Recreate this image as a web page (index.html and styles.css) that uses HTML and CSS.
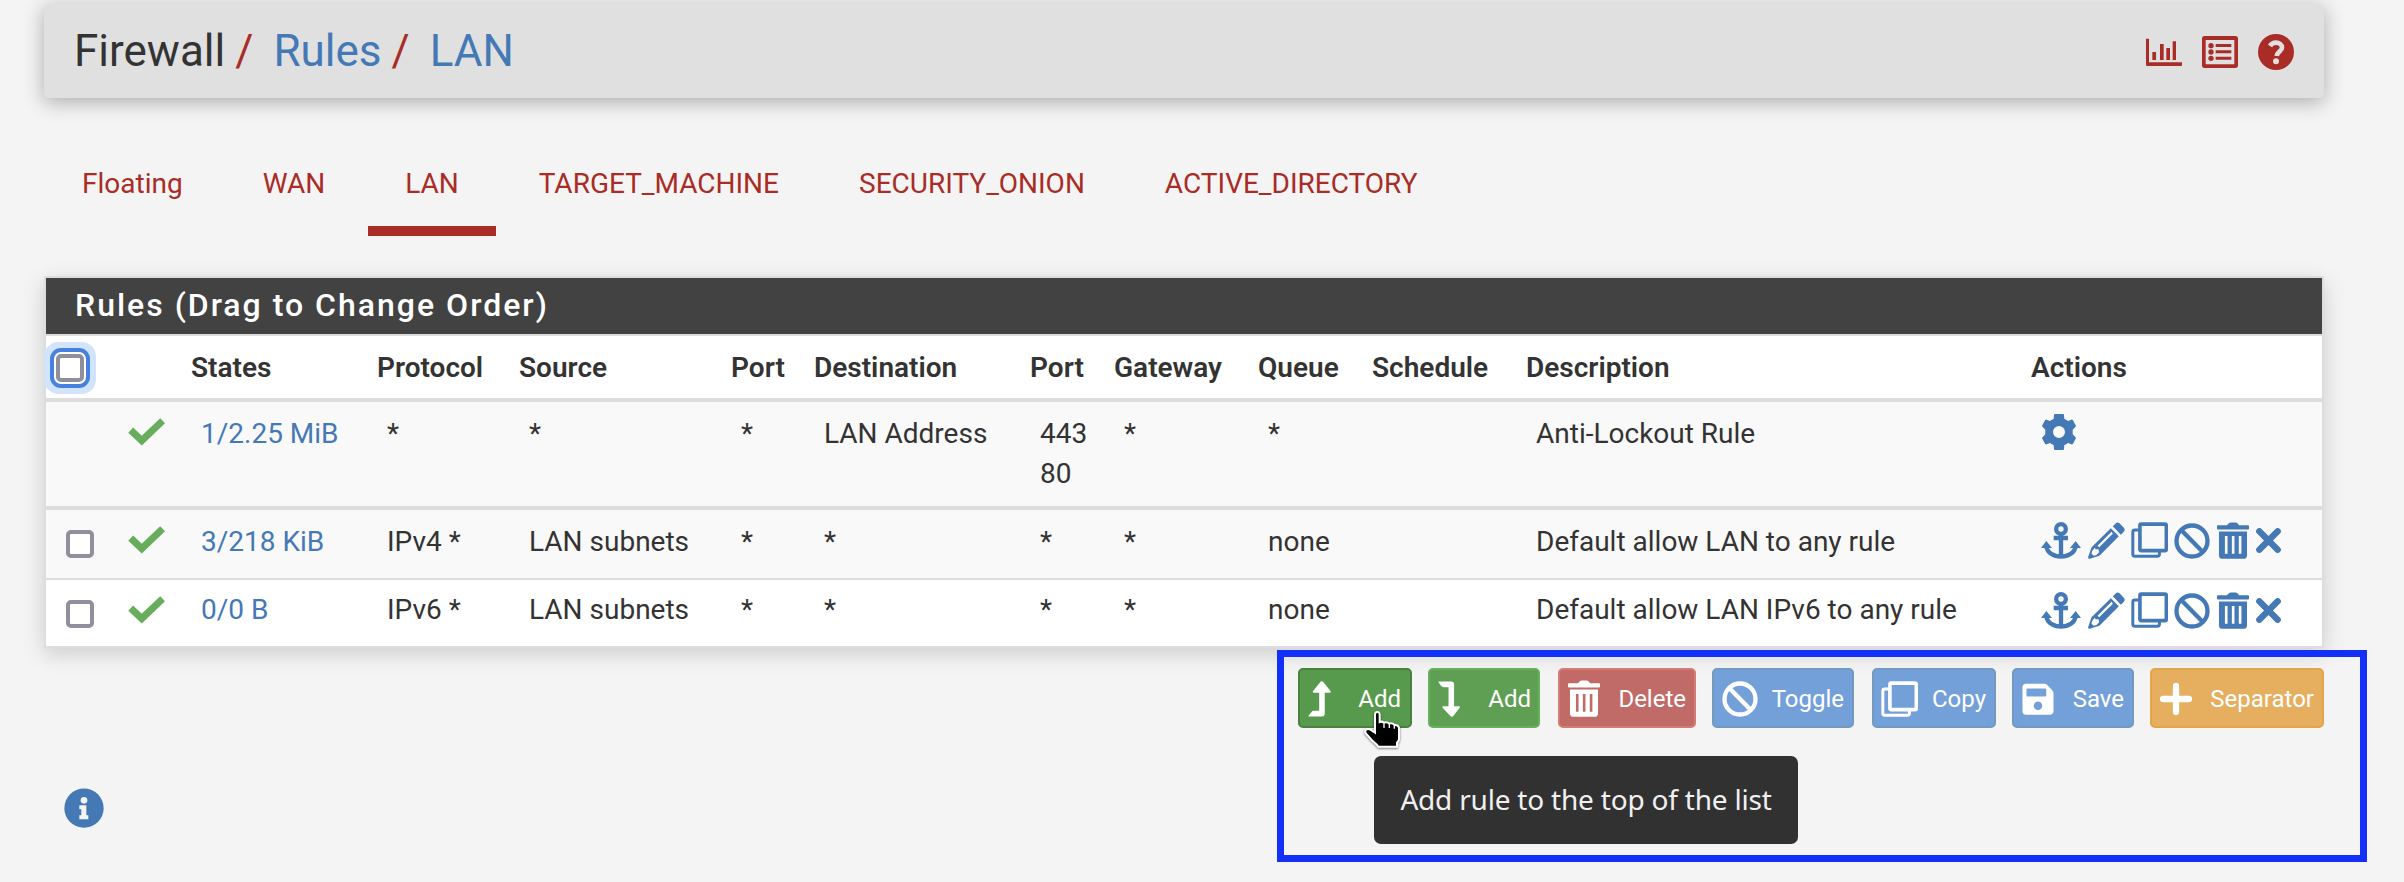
FILE: index.html
```html
<!DOCTYPE html>
<html lang="en">
<head>
<meta charset="utf-8">
<title>Firewall: Rules: LAN</title>
<link rel="stylesheet" href="styles.css">
</head>
<body>
<svg class="sprite" aria-hidden="true">
  <symbol id="i-chart" viewBox="0 0 108 84">
    <path d="M0 2h9v71h99v9q0 2-4 2H4q-4 0-4-4zM19 42h11v24H19zM42 18h11v48H42zM61 30h11v36H61zM80 10h10v56H80z" fill="currentColor"/>
  </symbol>
  <symbol id="i-list" viewBox="0 0 108 96">
    <path fill="currentColor" fill-rule="evenodd" d="M8 0h92q8 0 8 8v80q0 8-8 8H8q-8 0-8-8V8Q0 0 8 0zM11 12v71q0 2 2 2h82q2 0 2-2V12z"/>
    <path fill="currentColor" d="M41 24h47v9H41zM41 43h47v9H41zM41 62h47v9H41z"/>
    <circle cx="27" cy="29" r="8" fill="currentColor"/><circle cx="27" cy="48" r="8" fill="currentColor"/><circle cx="27" cy="67" r="8" fill="currentColor"/>
  </symbol>
  <symbol id="i-help" viewBox="0 0 108 108">
    <circle cx="54" cy="54" r="54" fill="currentColor"/>
    <path d="M36 36C40 29 46 26 54 26C64 26 72 32 72 41C72 51 58 52 56 66" fill="none" stroke="#e0e0e0" stroke-width="14"/>
    <circle cx="54" cy="82" r="9" fill="#e0e0e0"/>
  </symbol>
  <symbol id="i-check" viewBox="0 0 110 83">
    <path d="M8 36L41 67L103 8" fill="none" stroke="currentColor" stroke-width="21"/>
  </symbol>
  <symbol id="i-gear" viewBox="0 0 102 108">
    <path fill="currentColor" fill-rule="evenodd" d="M36 3Q36 0 39 0H63Q66 0 66 3L67 15Q73 17 78 21L88 17Q91 16 93 19L101 34Q103 37 100 39L92 47V61L100 69Q103 71 101 74L93 89Q91 92 88 91L78 87Q73 91 67 93L66 105Q66 108 63 108H39Q36 108 36 105L35 93Q29 91 24 87L14 91Q11 92 9 89L1 74Q-1 71 2 69L10 61V47L2 39Q-1 37 1 34L9 19Q11 16 14 17L24 21Q29 17 35 15zM51 36a18 18 0 1 0 0 36a18 18 0 1 0 0-36z"/>
  </symbol>
  <symbol id="i-anchor" viewBox="0 0 120 114">
    <g fill="none" stroke="currentColor">
      <circle cx="60" cy="21" r="14.5" stroke-width="13"/>
      <path d="M60 34V104M38 48H81" stroke-width="13"/>
      <path d="M16 72C18 92 38 104 60 104S102 92 104 72" stroke-width="13"/>
    </g>
    <path fill="currentColor" d="M0 78L16 57L33 78zM87 78L104 57L120 78z"/>
  </symbol>
  <symbol id="i-pencil" viewBox="0 0 110 111">
    <path fill="currentColor" d="M84 3Q89-1 94 4L107 17Q112 23 107 29L98 38L74 13z"/>
    <path fill="currentColor" fill-rule="evenodd" d="M68 19L92 43L39 96Q36 100 31 102L5 110Q-1 112 0 105L9 79Q10 75 14 72zM20 77L12 87L10 95L17 101L25 99L33 91L31 82H22zM70 29L28 71L33 76L74 35z"/>
  </symbol>
  <symbol id="i-clone" viewBox="0 0 112 111">
    <path d="M23 24H12Q5.500 24 5.500 30V97Q5.500 103 11 103H80Q86 103 86 97V88" fill="none" stroke="currentColor" stroke-width="9"/>
    <rect x="27" y="6" width="80" height="80" rx="4" fill="none" stroke="currentColor" stroke-width="11"/>
  </symbol>
  <symbol id="i-ban" viewBox="0 0 107 108">
    <g fill="none" stroke="currentColor" stroke-width="13"><circle cx="53.500" cy="54" r="46.500"/><path d="M21 21L86 87"/></g>
  </symbol>
  <symbol id="i-trash" viewBox="0 0 97 114">
    <path fill="currentColor" d="M3 9H30L36 3Q38 1 42 1H56Q60 1 62 3L67 9H94Q97 9 97 12V20Q97 22 94 22H3Q0 22 0 20V12Q0 9 3 9z"/>
    <path fill="currentColor" fill-rule="evenodd" d="M6 28H91V100Q91 111 80 111H17Q6 111 6 100zM24 42V96H32V42zM45 42V96H53V42zM66 42V96H74V42z"/>
  </symbol>
  <symbol id="i-times" viewBox="0 0 75 75">
    <path d="M10 10L65 65M65 10L10 65" stroke="currentColor" stroke-width="19" stroke-linecap="round"/>
  </symbol>
  <symbol id="i-up" viewBox="0 0 70 108">
    <path fill="currentColor" d="M42 0Q45 0 47 3L68 29Q71 35 66 35H51V98Q51 107 42 107H3Q0 107 2 104L10 94Q13 90 18 90H34V35H18Q12 35 16 29L37 3Q39 0 42 0z"/>
  </symbol>
  <symbol id="i-down" viewBox="0 0 70 108">
    <path fill="currentColor" d="M42 108Q45 108 47 105L66 81Q69 76 64 76H49V10Q49 1 40 1H3Q0 1 2 4L9 14Q12 18 17 18H32V76H16Q11 76 14 81L37 105Q39 108 42 108z"/>
  </symbol>
  <symbol id="i-save" viewBox="0 0 96 97">
    <path fill="currentColor" fill-rule="evenodd" d="M12 2H66Q72 2 76 6L91 22Q95 26 95 31V85Q95 96 84 96H12Q1 96 1 85V13Q1 2 12 2zM16 17Q13 17 13 20V38Q13 41 16 41H70Q73 41 73 38V20Q73 17 70 17zM48 56a13 13 0 1 0 0 26a13 13 0 1 0 0-26z"/>
  </symbol>
  <symbol id="i-plus" viewBox="0 0 96 96">
    <path d="M48 9V87M9 48H87" stroke="currentColor" stroke-width="19" stroke-linecap="round"/>
  </symbol>
  <symbol id="i-info" viewBox="0 0 120 120">
    <circle cx="60" cy="60.500" r="59" fill="currentColor"/>
    <circle cx="60" cy="37" r="10" fill="#f4f4f4"/>
    <path fill="#f4f4f4" d="M46 52H67V82H73V94H46V82H52V64H46z"/>
  </symbol>
</svg>

<div class="page">
  <header class="page-header">
    <h1 class="crumbs">Firewall<span class="sep">/</span><a>Rules</a><span class="sep">/</span><a>LAN</a></h1>
    <div class="header-icons">
      <svg class="ic-chart"><use href="#i-chart"/></svg>
      <svg class="ic-list"><use href="#i-list"/></svg>
      <svg class="ic-help"><use href="#i-help"/></svg>
    </div>
  </header>

  <nav class="tabs">
    <a>Floating</a><a>WAN</a><a class="active">LAN</a><a>TARGET_MACHINE</a><a>SECURITY_ONION</a><a>ACTIVE_DIRECTORY</a>
  </nav>

  <section class="panel">
    <h2 class="panel-title">Rules (Drag to Change Order)</h2>
    <table class="rules">
      <colgroup>
        <col class="c-box"><col class="c-ok"><col class="c-states"><col class="c-proto"><col class="c-src"><col class="c-sport"><col class="c-dst"><col class="c-dport"><col class="c-gw"><col class="c-queue"><col class="c-sched"><col class="c-desc"><col class="c-act">
      </colgroup>
      <thead>
        <tr>
          <th><span class="box focused"></span></th><th></th><th>States</th><th>Protocol</th><th>Source</th><th>Port</th><th>Destination</th><th>Port</th><th>Gateway</th><th>Queue</th><th>Schedule</th><th>Description</th><th>Actions</th>
        </tr>
      </thead>
      <tbody>
        <tr class="lockout">
          <td></td><td class="ok"><svg><use href="#i-check"/></svg></td><td><a>1/2.25 MiB</a></td><td>*</td><td>*</td><td>*</td><td>LAN Address</td><td>443<br>80</td><td>*</td><td>*</td><td></td><td>Anti-Lockout Rule</td>
          <td><div class="actions"><svg class="ic-gear"><use href="#i-gear"/></svg></div></td>
        </tr>
        <tr class="odd">
          <td><span class="box"></span></td><td class="ok"><svg><use href="#i-check"/></svg></td><td><a>3/218 KiB</a></td><td>IPv4 *</td><td>LAN subnets</td><td>*</td><td>*</td><td>*</td><td>*</td><td>none</td><td></td><td>Default allow LAN to any rule</td>
          <td><div class="actions"><svg class="ic-anchor"><use href="#i-anchor"/></svg><svg class="ic-pencil"><use href="#i-pencil"/></svg><svg class="ic-clone"><use href="#i-clone"/></svg><svg class="ic-ban"><use href="#i-ban"/></svg><svg class="ic-trash"><use href="#i-trash"/></svg><svg class="ic-times"><use href="#i-times"/></svg></div></td>
        </tr>
        <tr class="even">
          <td><span class="box"></span></td><td class="ok"><svg><use href="#i-check"/></svg></td><td><a>0/0 B</a></td><td>IPv6 *</td><td>LAN subnets</td><td>*</td><td>*</td><td>*</td><td>*</td><td>none</td><td></td><td>Default allow LAN IPv6 to any rule</td>
          <td><div class="actions"><svg class="ic-anchor"><use href="#i-anchor"/></svg><svg class="ic-pencil"><use href="#i-pencil"/></svg><svg class="ic-clone"><use href="#i-clone"/></svg><svg class="ic-ban"><use href="#i-ban"/></svg><svg class="ic-trash"><use href="#i-trash"/></svg><svg class="ic-times"><use href="#i-times"/></svg></div></td>
        </tr>
      </tbody>
    </table>
  </section>

  <div class="buttons">
    <button class="btn add hover"><svg class="b-arrow"><use href="#i-up"/></svg><span>Add</span></button>
    <button class="btn add second"><svg class="b-arrow"><use href="#i-down"/></svg><span>Add</span></button>
    <button class="btn delete"><svg class="b-trash"><use href="#i-trash"/></svg><span>Delete</span></button>
    <button class="btn blue toggle"><svg class="b-ban"><use href="#i-ban"/></svg><span>Toggle</span></button>
    <button class="btn blue copy"><svg class="b-clone"><use href="#i-clone"/></svg><span>Copy</span></button>
    <button class="btn blue save"><svg class="b-save"><use href="#i-save"/></svg><span>Save</span></button>
    <button class="btn separator"><svg class="b-plus"><use href="#i-plus"/></svg><span>Separator</span></button>
  </div>

  <svg class="info"><use href="#i-info"/></svg>
</div>

<div class="highlight"></div>
<div class="tooltip">Add rule to the top of the list</div>
<svg class="cursor" viewBox="0 0 111 120">
  <path d="M43 6Q49 6 50 13V36Q56 33 63 38Q72 35 79 41Q87 38 95 45Q105 44 108 53V88Q108 92 102 98V110H46Q42 104 30 94L10 72Q4 66 8 60Q14 54 22 59L36 68V13Q37 6 43 6z" fill="#000" stroke="#fff" stroke-width="6"/>
  <path d="M63 37V54M79 41V54M94 45V56" stroke="#fff" stroke-width="4"/>
</svg>
</body>
</html>
```

FILE: styles.css
```css
* { box-sizing: border-box; }
body {
  margin: 0;
  width: 2404px;
  height: 882px;
  overflow: hidden;
  background: #f4f4f4;
  color: #333;
  font: 28px/40px Roboto, "Liberation Sans", sans-serif;
}
svg { display: block; flex: none; }
a { color: #4479b5; text-decoration: none; }
.sprite { position: absolute; width: 0; height: 0; }
.page { padding: 4px 80px 0 44px; }

.page-header {
  display: flex;
  justify-content: space-between;
  height: 94px;
  padding: 0 30px 0 30px;
  background: #e0e0e0;
  border-radius: 4px;
  box-shadow: 0 4px 20px rgba(0, 0, 0, .3);
}
.crumbs { margin: 0; font-size: 44px; font-weight: 400; line-height: 94px; white-space: nowrap; }
.crumbs .sep { color: #a92c26; margin: 0 20px 0 10px; }
.header-icons { display: flex; align-items: flex-start; gap: 20px; color: #a92c26; }
.ic-chart { width: 36px; height: 28px; margin-top: 34px; }
.ic-list { width: 36px; height: 32px; margin-top: 32px; }
.ic-help { width: 36px; height: 36px; margin-top: 30px; }

.tabs { display: flex; gap: 6px; height: 138px; padding: 60px 0 0 1px; }
.tabs a {
  height: 78px;
  padding: 6px 37px 0;
  color: #a92c26;
  border-bottom: 10px solid transparent;
}
.tabs a.active { border-bottom-color: #a92c26; }

.panel {
  margin-top: 40px;
  border: 2px solid #ddd;
  background: #fff;
  box-shadow: 0 6px 20px rgba(0, 0, 0, .16);
}
.panel-title {
  margin: 0;
  height: 56px;
  padding-left: 29px;
  background: #424242;
  color: #fff;
  font-size: 32px;
  font-weight: 500;
  line-height: 54px;
  letter-spacing: 2px;
}
.rules { width: 2276px; table-layout: fixed; border-collapse: separate; border-spacing: 0; border-top: 2px solid #ddd; }
.c-box { width: 80px; } .c-ok { width: 65px; } .c-states { width: 186px; } .c-proto { width: 142px; }
.c-src { width: 212px; } .c-sport { width: 83px; } .c-dst { width: 216px; } .c-dport { width: 84px; }
.c-gw { width: 144px; } .c-queue { width: 114px; } .c-sched { width: 154px; } .c-desc { width: 505px; } .c-act { width: 291px; }
th, td { text-align: left; vertical-align: top; white-space: nowrap; }
th { height: 66px; padding: 12px 0 0; font-weight: 600; border-bottom: 4px solid #ddd; }
td { padding: 12px 0 0 10px; }
.lockout td { height: 108px; background: #f9f9f9; border-bottom: 4px solid #ddd; }
.odd td { height: 70px; background: #f9f9f9; border-bottom: 2px solid #ddd; }
.even td { height: 66px; padding-top: 10px; }
.box {
  display: block;
  width: 28px;
  height: 28px;
  margin: 8px 0 0 10px;
  border: 4px solid #8f8f9d;
  border-radius: 5px;
  background: #fff;
}
.even .box { margin-top: 10px; }
.box.focused { margin-top: 6px; box-shadow: 0 0 0 2px #fff, 0 0 0 6px #4781df, 0 0 0 12px #d1e4fc; }
.ok { padding-left: 2px; color: #67ad5b; }
.ok svg { width: 37px; height: 28px; margin-top: 4px; }
.even .ok svg { margin-top: 6px; }
.actions { display: flex; align-items: flex-start; color: #4479b5; height: 40px; }
.ic-gear { width: 34px; height: 36px; margin: 0 0 0 1px; }
.ic-anchor { width: 40px; height: 38px; }
.ic-pencil { width: 37px; height: 37px; margin-left: 7px; }
.ic-clone { width: 37px; height: 37px; margin-left: 6px; }
.ic-ban { width: 36px; height: 36px; margin: 1px 0 0 6px; }
.ic-trash { width: 32px; height: 38px; margin-left: 7px; }
.ic-times { width: 25px; height: 25px; margin: 6px 0 0 7px; }
.even .actions { padding-top: 2px; }

.buttons { display: flex; justify-content: flex-end; gap: 16px; margin-top: 20px; }
.btn {
  display: flex;
  align-items: center;
  justify-content: space-between;
  height: 60px;
  padding: 2px 8px 0 8px;
  border: 2px solid;
  border-radius: 5px;
  color: #fff;
  font: 24px/32px Roboto, "Liberation Sans", sans-serif;
}
.add { width: 112px; background: #5f9f54; border-color: #67b05c; padding-right: 7px; }
.add.hover { width: 114px; background: #579a4e; border-color: #4a813e; padding-right: 9px; }
.add.second { margin-right: 2px; }
.delete { width: 138px; background: #c16b69; border-color: #d67a74; }
.toggle { width: 142px; margin-right: 2px; }
.blue { background: #74a0da; border-color: #7499bf; }
.copy { width: 124px; padding-left: 7px; }
.save { width: 122px; }
.separator { width: 174px; background: #e6af60; border-color: #e3a44a; }
.b-arrow { width: 23px; height: 36px; }
.b-trash { width: 32px; height: 38px; }
.b-ban { width: 36px; height: 36px; }
.b-clone { width: 37px; height: 37px; }
.b-save { width: 32px; height: 32px; }
.b-plus { width: 32px; height: 32px; }

.info { width: 40px; height: 40px; margin: 60px 0 0 20px; color: #4479b5; }

.highlight {
  position: absolute;
  left: 1277px;
  top: 650px;
  width: 1090px;
  height: 212px;
  border: 7px solid #1230f7;
}
.tooltip {
  position: absolute;
  left: 1374px;
  top: 756px;
  width: 424px;
  height: 88px;
  border-radius: 7px;
  background: #313131;
  color: #f0f0f0;
  font: 28px/87px "Noto Sans", sans-serif;
  letter-spacing: -.2px;
  text-align: center;
  white-space: nowrap;
}
.cursor { position: absolute; left: 1363px; top: 710px; width: 37px; height: 40px; filter: drop-shadow(0 1px 1px rgba(0, 0, 0, .5)); }
```
